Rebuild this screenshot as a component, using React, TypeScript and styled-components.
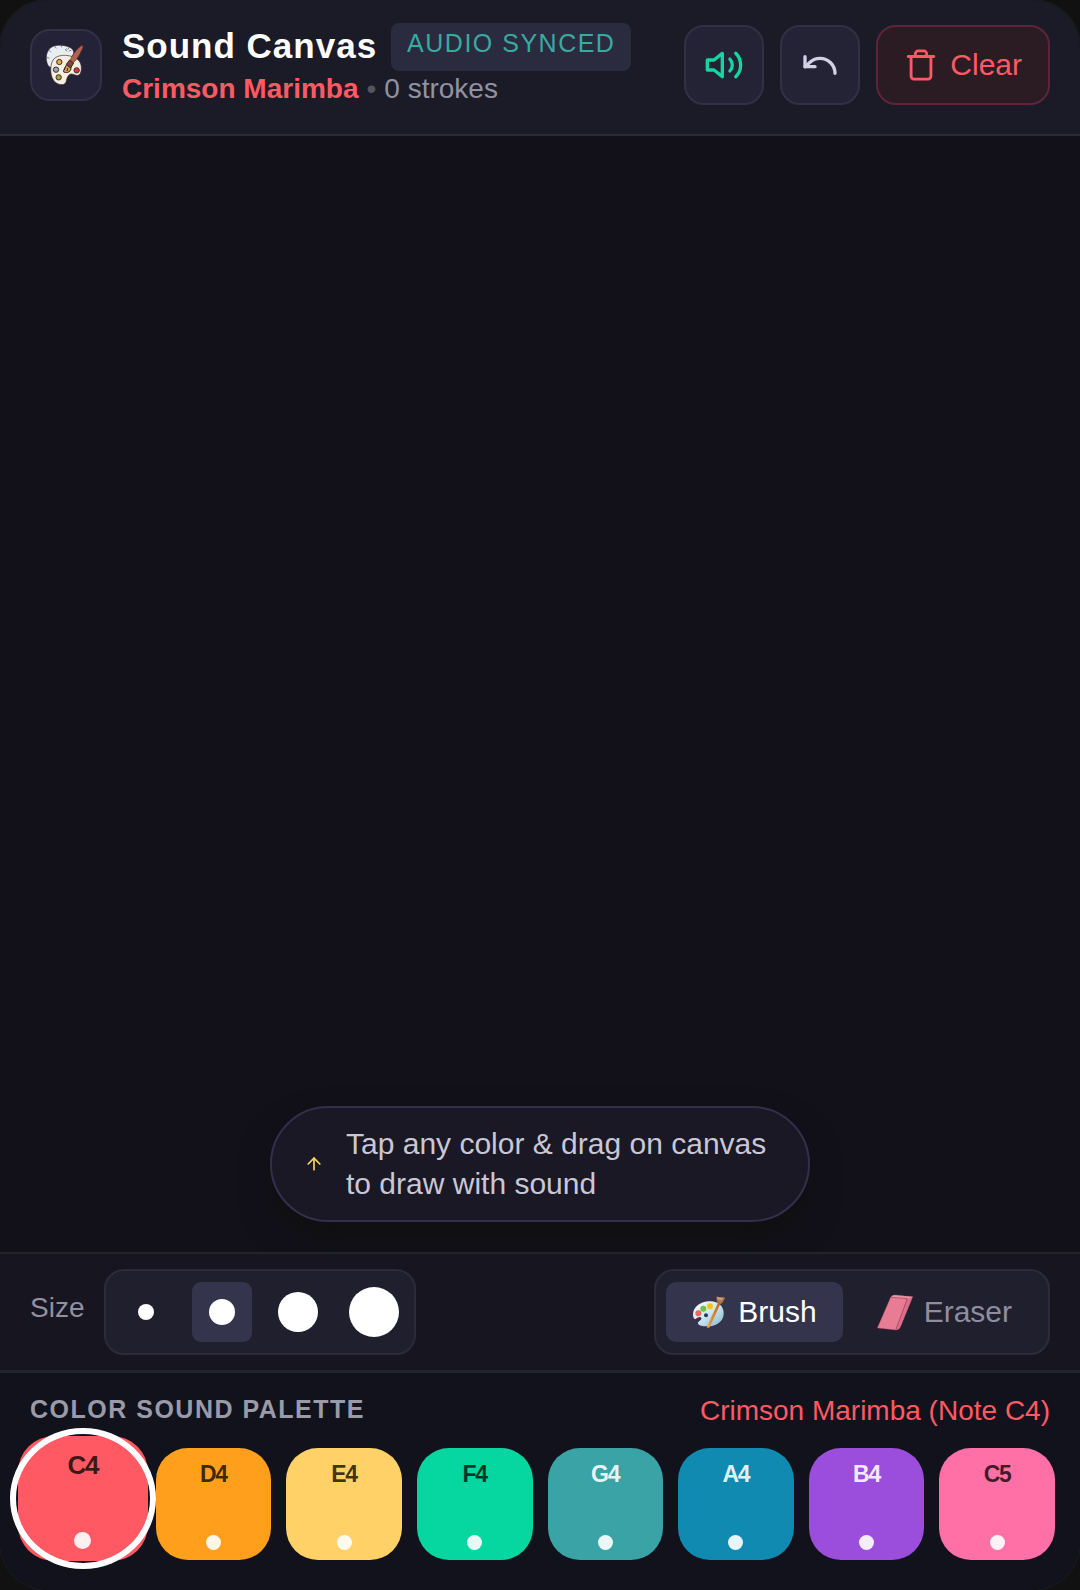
import React, { useState } from "react";
import styled, { createGlobalStyle } from "styled-components";
import { ArrowUp, Undo } from "lucide-react";

const GlobalStyle = createGlobalStyle`
  * { box-sizing: border-box; }
  body {
    margin: 0;
    background: #111111;
    font-family: "Liberation Sans", Arial, Helvetica, sans-serif;
  }
  button { font-family: inherit; cursor: pointer; padding: 0; margin: 0; }
  svg { display: block; flex: none; }
`;

const Shell = styled.main`
  display: flex;
  flex-direction: column;
  min-height: 100vh;
  overflow: hidden;
  border-radius: 48px;
  background: #12111a;
  box-shadow: 0 0 0 1px #1d1d20;
`;

const Header = styled.header`
  display: flex;
  align-items: center;
  gap: 20px;
  padding: 23px 30px 27px;
  border-bottom: 2px solid #2a2a36;
  background: #1b1b27;
`;

const Logo = styled.div`
  display: grid;
  place-items: center;
  flex: none;
  width: 72px;
  height: 72px;
  border: 2px solid #322f48;
  border-radius: 20px;
  background: #242236;
`;

const Heading = styled.div`
  flex: 1;
  min-width: 0;
`;

const TitleRow = styled.div`
  display: flex;
  align-items: center;
  gap: 14px;
  height: 48px;
`;

const Title = styled.h1`
  margin: 0;
  padding-bottom: 2px;
  color: #ffffff;
  font-size: 35px;
  line-height: 40px;
  letter-spacing: 1px;
  white-space: nowrap;
`;

const Badge = styled.span`
  padding: 4px 16px 12px;
  border-radius: 8px;
  background: #2b2b3f;
  color: #3aa9a0;
  font-size: 25px;
  line-height: 32px;
  letter-spacing: 0.06em;
  white-space: nowrap;
`;

const Meta = styled.div`
  display: flex;
  gap: 8px;
  color: #9291a0;
  font-size: 28px;
  line-height: 36px;
  white-space: nowrap;
`;

const Instrument = styled.strong`
  color: #ff5964;
`;

const Bullet = styled.span`
  color: #56555f;
`;

const Actions = styled.div`
  display: flex;
  gap: 16px;
`;

const ActionButton = styled.button<{ $danger?: boolean; $color: string }>`
  display: flex;
  align-items: center;
  justify-content: center;
  gap: 12px;
  min-width: 80px;
  height: 80px;
  padding: 0 ${(p) => (p.$danger ? 26 : 0)}px;
  border: 2px solid ${(p) => (p.$danger ? "#5e2539" : "#322f46")};
  border-radius: 20px;
  background: ${(p) => (p.$danger ? "#2b1c23" : "#242336")};
  color: ${(p) => p.$color};
  font-size: 30px;
`;

const Canvas = styled.section`
  display: flex;
  flex: 1;
  align-items: flex-end;
  justify-content: center;
  min-height: 200px;
  padding: 30px;
`;

const Hint = styled.div`
  display: flex;
  align-items: center;
  gap: 22px;
  max-width: 540px;
  padding: 16px 32px;
  border: 2px solid #332f4c;
  border-radius: 58px;
  background: #191824;
  box-shadow: 0 16px 30px #101010;
  color: #c9c7d6;
  font-size: 30px;
  line-height: 40px;
`;

const Toolbar = styled.section`
  display: flex;
  align-items: center;
  justify-content: space-between;
  padding: 15px 30px;
  border-top: 2px solid #23232f;
  border-bottom: 3px solid #23232f;
  background: #171620;
`;

const SizeField = styled.div`
  display: flex;
  align-items: center;
  gap: 20px;
`;

const SizeLabel = styled.span`
  padding-bottom: 8px;
  color: #9291a0;
  font-size: 28px;
  line-height: 32px;
`;

const Segment = styled.div<{ $gap: number }>`
  display: flex;
  align-items: center;
  gap: ${(p) => p.$gap}px;
  height: 86px;
  padding: 0 10px;
  border: 2px solid #2c2b39;
  border-radius: 20px;
  background: #201f2e;
`;

const SizeButton = styled.button<{ $active: boolean }>`
  display: grid;
  place-items: center;
  width: 60px;
  height: 60px;
  border: 0;
  border-radius: 9px;
  background: ${(p) => (p.$active ? "#35344d" : "transparent")};
`;

const Dot = styled.span<{ $size: number }>`
  width: ${(p) => p.$size}px;
  height: ${(p) => p.$size}px;
  border-radius: 50%;
  background: #ffffff;
`;

const ToolButton = styled.button<{ $active: boolean }>`
  display: flex;
  align-items: center;
  gap: 12px;
  height: 60px;
  padding: 0 26px;
  border: 0;
  border-radius: 10px;
  background: ${(p) => (p.$active ? "#35344d" : "transparent")};
  color: ${(p) => (p.$active ? "#ffffff" : "#8f8d9f")};
  font-size: 30px;
`;

const Palette = styled.section`
  padding: 20px 25px 30px;
  background: #11121b;
`;

const PaletteHead = styled.div`
  display: flex;
  align-items: center;
  justify-content: space-between;
  padding: 0 5px;
`;

const PaletteTitle = styled.h2`
  margin: 0;
  padding-bottom: 4px;
  color: #9a9aa8;
  font-size: 25px;
  line-height: 32px;
  letter-spacing: 0.06em;
`;

const PaletteNote = styled.span`
  color: #ff5964;
  font-size: 28px;
  line-height: 36px;
`;

const Swatches = styled.div`
  display: grid;
  grid-template-columns: repeat(8, minmax(0, 1fr));
  gap: 15px;
  margin-top: 19px;
`;

const Swatch = styled.button<{ $color: string; $text: string; $active: boolean }>`
  position: relative;
  display: flex;
  flex-direction: column;
  align-items: center;
  justify-content: space-between;
  height: ${(p) => (p.$active ? 125 : 112)}px;
  margin: ${(p) => (p.$active ? "-12px -7px -1px" : "0")};
  padding: ${(p) => (p.$active ? "15px 0 12px" : "12px 0 10px")};
  border: 0;
  border-radius: ${(p) => (p.$active ? 36 : 32)}px;
  background: ${(p) => p.$color};
  color: ${(p) => p.$text};
  font-size: ${(p) => (p.$active ? 26 : 23)}px;
  font-weight: 700;
  line-height: 28px;
  letter-spacing: -0.05em;
`;

const Ring = styled.span`
  position: absolute;
  inset: -8px;
  border: 6px solid #ffffff;
  border-radius: 50%;
`;

const Pip = styled.span<{ $active: boolean }>`
  width: ${(p) => (p.$active ? 17 : 15)}px;
  height: ${(p) => (p.$active ? 17 : 15)}px;
  border-radius: 50%;
  background: rgba(255, 255, 255, 0.9);
`;

const ArtistIcon = () => (
  <svg width="44" height="44" viewBox="132 130 132 132" aria-hidden="true">
    <path d="M141 190c-6-20 0-42 18-50 17-7 42-3 55 6 10 8 9 20 0 25l-30 6c-14 2-26 12-29 27-7-1-12-6-14-14z" fill="#e8edf2" stroke="#28242c" strokeWidth="2" />
    <g fill="none" stroke="#4b4a56" strokeWidth="2" strokeLinecap="round">
      <path d="M148 153l4 4M165 141l3 4M184 138l1 4M142 174l5 1M207 144l-3 5M213 152l-5 2M199 147l-3 4 5 3" />
    </g>
    <path d="M155 190c5-19 27-26 50-22 22 3 40 15 39 38 0 15-6 23-15 21-8-2-14-7-21-2-8 6-7 15-11 24-5 9-22 7-32-2-14-14-15-38-10-57z" fill="#f7eee2" stroke="#3b2b28" strokeWidth="2" />
    <g stroke="#3a302d" strokeWidth="3">
      <circle cx="178" cy="187" r="8" fill="#e9a83a" />
      <circle cx="168" cy="210" r="8" fill="#9aa2ad" />
      <circle cx="176" cy="233" r="8" fill="#a9a23c" />
      <circle cx="230" cy="212" r="8" fill="#d63a2c" />
    </g>
    <path d="M191 217c-2-7 5-12 8-21l14 8c1 10-9 18-22 13z" fill="#d9a04a" stroke="#3a2a26" strokeWidth="3" />
    <path d="M196 202l-3 9M203 205l-2 9" stroke="#3a2a26" strokeWidth="3" />
    <path d="M199 194l10-13 12 9-9 15z" fill="#7b4a40" stroke="#3a2520" strokeWidth="3" />
    <path d="M211 180c8-17 22-35 35-43 5 2 3 8-1 15-6 13-14 28-25 37z" fill="#b5614f" stroke="#53302b" strokeWidth="2" />
    <path d="M240 239l7 6M249 238l-4 6" stroke="#4a1e2c" strokeWidth="2" />
  </svg>
);

const PaletteIcon = () => (
  <svg width="34" height="34" viewBox="155 165 102 102" aria-hidden="true">
    <defs>
      <linearGradient id="board" x1="0" y1="0" x2="1" y2="1">
        <stop offset="0" stopColor="#f7fbfd" />
        <stop offset="0.5" stopColor="#cfe6ef" />
        <stop offset="1" stopColor="#7fb9d2" />
      </linearGradient>
      <linearGradient id="handle" x1="0" y1="0" x2="1" y2="0">
        <stop offset="0" stopColor="#f2a54a" />
        <stop offset="1" stopColor="#b96420" />
      </linearGradient>
    </defs>
    <path d="M158 224c0-24 24-41 52-40 26 1 41 16 40 38-1 24-24 38-50 37-13 0-26-1-27-9-1-6 12-9 10-15-2-7-10-3-16 1-5 3-9-4-9-12z" fill="url(#board)" />
    <circle cx="174" cy="220" r="9" fill="#e8685a" />
    <circle cx="189" cy="206" r="9" fill="#76bd53" />
    <circle cx="209" cy="199" r="9" fill="#f4bf2e" />
    <circle cx="197" cy="226" r="6" fill="#273a69" />
    <path d="M233 188l7 3-30 67c-3 6-7 7-9 5-1-2 0-5 1-8z" fill="url(#handle)" />
    <path d="M232 189c-3-7-5-14-3-20 8 5 16 0 26 5-5 4-6 14-14 18z" fill="#a97650" />
    <path d="M231 171c5 3 12 2 18 3l-6 7-12-3z" fill="#d0a275" />
  </svg>
);

const EraserIcon = () => (
  <svg width="34" height="34" viewBox="716 165 102 102" overflow="visible" aria-hidden="true">
    <path d="M714 264l39-90q5-9 12-9l55 5-37 91q-4 9-13 9z" fill="#e77c94" />
    <path d="M804 176l16-6-37 91q-4 9-13 8z" fill="#dc7089" />
    <path d="M753 174q5-9 12-9l55 5-16 7z" fill="#ee93a6" />
    <path d="M755 172l49 4-34 92" fill="none" stroke="#8d3b50" strokeWidth="2" />
    <path d="M714 264l39-90q5-9 12-9l55 5-37 91q-4 9-13 9z" fill="none" stroke="#a54a61" strokeWidth="1" />
  </svg>
);

const SpeakerIcon = () => (
  <svg width="40" height="40" viewBox="0 0 24 24" fill="none" stroke="currentColor" strokeWidth="2" strokeLinecap="round" strokeLinejoin="round" aria-hidden="true">
    <polygon points="11 5 6 9 2 9 2 15 6 15 11 19 11 5" />
    <path d="M15.54 8.46a5 5 0 0 1 0 7.07" />
    <path d="M19.07 4.93a10 10 0 0 1 0 14.14" />
  </svg>
);

const TrashIcon = () => (
  <svg width="34" height="34" viewBox="0 0 24 24" fill="none" stroke="currentColor" strokeWidth="2" strokeLinecap="round" strokeLinejoin="round" aria-hidden="true">
    <path d="M3 6h18" />
    <path d="M19 6v14c0 1-1 2-2 2H7c-1 0-2-1-2-2V6" />
    <path d="M8 6V4c0-1 1-2 2-2h4c1 0 2 1 2 2v2" />
  </svg>
);

const DARK = "rgba(0, 0, 0, 0.75)";
const LIGHT = "rgba(255, 255, 255, 0.9)";

const notes = [
  { note: "C4", name: "Crimson Marimba", color: "#ff5964", text: DARK },
  { note: "D4", name: "Amber Marimba", color: "#ff9f1c", text: DARK },
  { note: "E4", name: "Golden Marimba", color: "#ffd166", text: DARK },
  { note: "F4", name: "Emerald Marimba", color: "#06d6a0", text: DARK },
  { note: "G4", name: "Teal Marimba", color: "#3aa3a5", text: LIGHT },
  { note: "A4", name: "Ocean Marimba", color: "#118ab2", text: LIGHT },
  { note: "B4", name: "Violet Marimba", color: "#9b4ddb", text: LIGHT },
  { note: "C5", name: "Rose Marimba", color: "#ff70a6", text: DARK },
];

const sizes = [16, 26, 40, 50];

export default function App() {
  const [selected, setSelected] = useState(0);
  const [size, setSize] = useState(1);
  const [tool, setTool] = useState("brush");
  const current = notes[selected];

  return (
    <>
      <GlobalStyle />
      <Shell>
        <Header>
          <Logo><ArtistIcon /></Logo>
          <Heading>
            <TitleRow>
              <Title>Sound Canvas</Title>
              <Badge>AUDIO SYNCED</Badge>
            </TitleRow>
            <Meta>
              <Instrument>{current.name}</Instrument>
              <Bullet>•</Bullet>
              <span>0 strokes</span>
            </Meta>
          </Heading>
          <Actions>
            <ActionButton $color="#14d6a2" aria-label="Sound"><SpeakerIcon /></ActionButton>
            <ActionButton $color="#d3d0e4" aria-label="Undo"><Undo size={40} /></ActionButton>
            <ActionButton $danger $color="#ff5964"><TrashIcon />Clear</ActionButton>
          </Actions>
        </Header>

        <Canvas aria-label="Drawing canvas">
          <Hint>
            <ArrowUp size={20} color="#ffd166" />
            <span>Tap any color &amp; drag on canvas to draw with sound</span>
          </Hint>
        </Canvas>

        <Toolbar>
          <SizeField>
            <SizeLabel id="size-label">Size</SizeLabel>
            <Segment $gap={16} role="group" aria-labelledby="size-label">
              {sizes.map((s, i) => (
                <SizeButton key={s} $active={i === size} aria-pressed={i === size} aria-label={`${s} pixels`} onClick={() => setSize(i)}>
                  <Dot $size={s} />
                </SizeButton>
              ))}
            </Segment>
          </SizeField>
          <Segment $gap={9} role="group" aria-label="Tool">
            <ToolButton $active={tool === "brush"} aria-pressed={tool === "brush"} onClick={() => setTool("brush")}>
              <PaletteIcon />Brush
            </ToolButton>
            <ToolButton $active={tool === "eraser"} aria-pressed={tool === "eraser"} onClick={() => setTool("eraser")}>
              <EraserIcon />Eraser
            </ToolButton>
          </Segment>
        </Toolbar>

        <Palette>
          <PaletteHead>
            <PaletteTitle>COLOR SOUND PALETTE</PaletteTitle>
            <PaletteNote>{current.name} (Note {current.note})</PaletteNote>
          </PaletteHead>
          <Swatches>
            {notes.map((n, i) => (
              <Swatch key={n.note} $color={n.color} $text={n.text} $active={i === selected} aria-pressed={i === selected} onClick={() => setSelected(i)}>
                {n.note}
                <Pip $active={i === selected} />
                {i === selected && <Ring />}
              </Swatch>
            ))}
          </Swatches>
        </Palette>
      </Shell>
    </>
  );
}
